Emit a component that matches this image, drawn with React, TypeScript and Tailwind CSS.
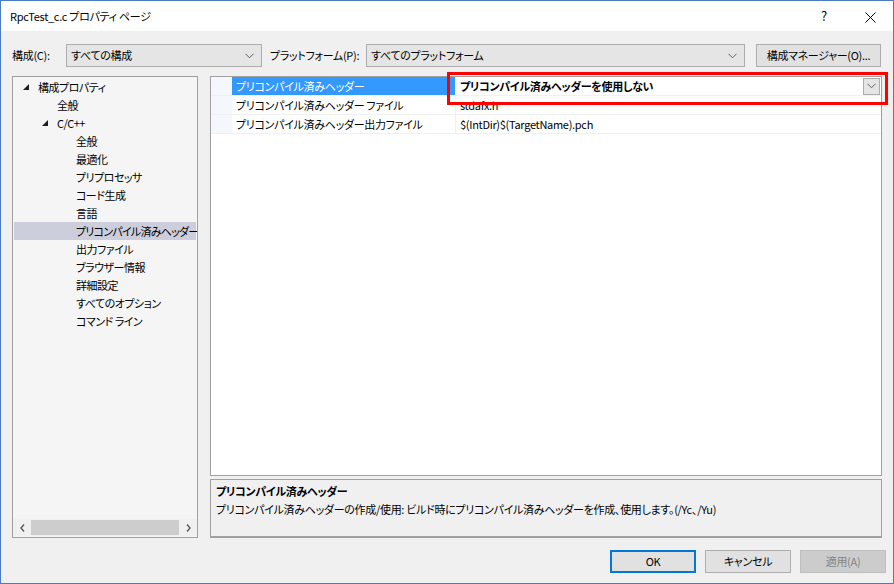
import React from 'react';

const font = "font-['Segoe_UI','Noto_Sans_CJK_JP',sans-serif] [font-feature-settings:'palt'] tracking-[-0.3px]";

const Chevron = ({ className = '' }: { className?: string }) => (
  <svg width="9" height="6" viewBox="0 0 9 6" className={className}>
    <path d="M0.5 0.8 L4.5 4.8 L8.5 0.8" fill="none" stroke="#606060" strokeWidth="1" />
  </svg>
);

const Tri = () => (
  <svg width="6" height="6" viewBox="0 0 6 6">
    <polygon points="6,0 6,6 0,6" fill="#1e1e1e" />
  </svg>
);

const Combo = ({ text, width }: { text: string; width: string }) => (
  <div className={`${width} h-[23px] flex items-center justify-between bg-[#e5e5e5] border border-[#adadad] pl-[4px] pr-[7px]`}>
    <span className="whitespace-nowrap">{text}</span>
    <Chevron />
  </div>
);

const treeItems: { label: string; indent: number; tri?: boolean; selected?: boolean }[] = [
  { label: '構成プロパティ', indent: 0, tri: true },
  { label: '全般', indent: 1 },
  { label: 'C/C++', indent: 1, tri: true },
  { label: '全般', indent: 2 },
  { label: '最適化', indent: 2 },
  { label: 'プリプロセッサ', indent: 2 },
  { label: 'コード生成', indent: 2 },
  { label: '言語', indent: 2 },
  { label: 'プリコンパイル済みヘッダー', indent: 2, selected: true },
  { label: '出力ファイル', indent: 2 },
  { label: 'ブラウザー情報', indent: 2 },
  { label: '詳細設定', indent: 2 },
  { label: 'すべてのオプション', indent: 2 },
  { label: 'コマンド ライン', indent: 2 },
];

const indentClass = ['pl-[24px]', 'pl-[43px]', 'pl-[62px]'];

const props = [
  { name: 'プリコンパイル済みヘッダー', value: 'プリコンパイル済みヘッダーを使用しない', selected: true },
  { name: 'プリコンパイル済みヘッダー ファイル', value: 'stdafx.h' },
  { name: 'プリコンパイル済みヘッダー出力ファイル', value: '$(IntDir)$(TargetName).pch' },
];

export default function App() {
  return (
    <div className={`${font} relative w-[894px] h-[584px] border border-[#4a7cc4] bg-[#f0f0f0] text-[11px] text-[#000] flex flex-col overflow-hidden`}>
      {/* title bar */}
      <div className="h-[30px] bg-white flex items-center justify-between pl-[9px] shrink-0">
        <span>RpcTest_c.c プロパティ ページ</span>
        <div className="flex items-center h-full">
          <span className="w-[46px] text-center text-[13px]">?</span>
          <span className="w-[46px] text-center">
            <svg width="11" height="11" viewBox="0 0 11 11" className="inline-block">
              <path d="M0.5 0.5 L10.5 10.5 M10.5 0.5 L0.5 10.5" stroke="#000" strokeWidth="1" />
            </svg>
          </span>
        </div>
      </div>

      <div className="flex-1 flex flex-col px-[11px]">
        {/* toolbar */}
        <div className="mt-[13px] h-[23px] flex items-center whitespace-nowrap">
          <span className="w-[54px]">構成(C):</span>
          <Combo text="すべての構成" width="w-[196px]" />
          <span className="ml-[8px] w-[96px]">プラットフォーム(P):</span>
          <Combo text="すべてのプラットフォーム" width="w-[379px]" />
          <div className="ml-[11px] w-[125px] h-[23px] flex items-center justify-center bg-[#e1e1e1] border border-[#adadad]">
            構成マネージャー(O)...
          </div>
        </div>

        {/* main */}
        <div className="mt-[9px] h-[462px] flex gap-[12px]">
          {/* tree */}
          <div className="w-[186px] shrink-0 h-full border border-[#a0a0a0] bg-[#f5f5f5] flex flex-col overflow-hidden">
            <div className="flex-1 pt-[1px] px-[1px] tracking-[-0.5px]">
              {treeItems.map((t, i) => (
                <div
                  key={i}
                  className={`h-[18px] flex items-center whitespace-nowrap ${t.selected ? 'bg-[#cccedb] tracking-[-0.75px]' : ''} ${t.tri ? (t.indent === 0 ? 'pl-[9px]' : 'pl-[28px]') : indentClass[t.indent]}`}
                >
                  {t.tri && (
                    <span className="w-[15px] flex items-center">
                      <Tri />
                    </span>
                  )}
                  <span>{t.label}</span>
                </div>
              ))}
            </div>
            <div className="h-[17px] flex items-center bg-[#f0f0f0] mb-[1px]">
              <span className="w-[18px] flex justify-center">
                <svg width="5" height="8" viewBox="0 0 5 8"><path d="M4 0.5 L1 4 L4 7.5" fill="none" stroke="#606060" strokeWidth="1.5" /></svg>
              </span>
              <div className="flex-1 h-[15px] bg-[#cdcdcd]" />
              <span className="w-[18px] flex justify-center">
                <svg width="5" height="8" viewBox="0 0 5 8"><path d="M1 0.5 L4 4 L1 7.5" fill="none" stroke="#606060" strokeWidth="1.5" /></svg>
              </span>
            </div>
          </div>

          {/* right column */}
          <div className="flex-1 flex flex-col">
            <div className="h-[400px] border border-[#a0a0a0] bg-white">
              {props.map((p, i) => (
                <div key={i} className="h-[19px] flex border-b border-[#f0f0f0]">
                  <div className="w-[21px] bg-[#f4f7fb]" />
                  <div className={`w-[224px] flex items-center pl-[4px] whitespace-nowrap overflow-hidden border-r border-[#f0f0f0] ${p.selected ? 'bg-[#3399ff] text-white' : ''}`}>
                    {p.name}
                  </div>
                  <div className="flex-1 flex items-center justify-between pl-[4px] pr-[1px]">
                    <span className={p.selected ? 'font-bold' : ''}>{p.value}</span>
                    {p.selected && (
                      <div className="w-[17px] h-[17px] bg-[#e5e5e5] border border-[#acacac] flex items-center justify-center">
                        <Chevron />
                      </div>
                    )}
                  </div>
                </div>
              ))}
            </div>
            <div className="mt-[3px] h-[59px] border border-[#a0a0a0] border-b-2 bg-[#f0f0f0] px-[5px] pt-[2px]">
              <div className="font-bold h-[18px] flex items-center">プリコンパイル済みヘッダー</div>
              <div className="h-[18px] flex items-center whitespace-nowrap">
                プリコンパイル済みヘッダーの作成/使用: ビルド時にプリコンパイル済みヘッダーを作成、使用します。(/Yc、/Yu)
              </div>
            </div>
          </div>
        </div>

        {/* buttons */}
        <div className="mt-[12px] h-[23px] flex justify-end gap-[9px] mr-[-4px]">
          <div className="w-[86px] h-[23px] flex items-center justify-center bg-[#e1e1e1] border-2 border-[#0078d7]">OK</div>
          <div className="w-[86px] h-[23px] flex items-center justify-center bg-[#e1e1e1] border border-[#adadad]">キャンセル</div>
          <div className="w-[86px] h-[23px] flex items-center justify-center bg-[#cccccc] border border-[#bfbfbf] text-[#838383]">適用(A)</div>
        </div>
      </div>

      {/* red highlight overlay */}
      <div className="absolute left-[446px] top-[71px] w-[441px] h-[33px] border-[3px] border-[#ff0000] pointer-events-none" />
    </div>
  );
}
